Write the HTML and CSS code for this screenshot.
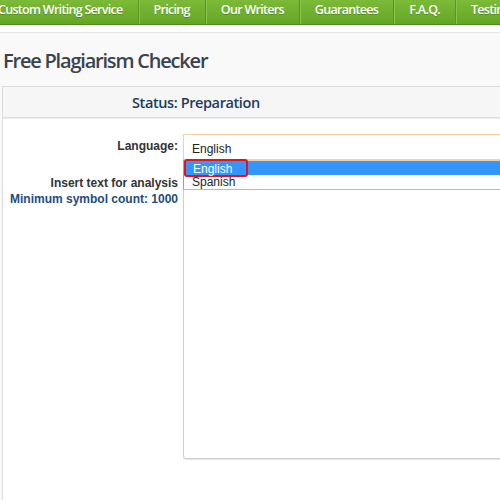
FILE: index.html
```html
<!DOCTYPE html>
<html>
<head>
<meta charset="utf-8">
<link rel="stylesheet" href="styles.css">
</head>
<body>
<nav class="nav">
  <ul class="nav-list">
    <li class="nav-item first">Custom Writing Service</li>
    <li class="nav-item">Pricing</li>
    <li class="nav-item">Our Writers</li>
    <li class="nav-item">Guarantees</li>
    <li class="nav-item">F.A.Q.</li>
    <li class="nav-item">Testimonials</li>
  </ul>
</nav>
<div class="strip"></div>
<h1 class="title">Free Plagiarism Checker</h1>
<section class="panel">
  <div class="status"><span class="status-text">Status: Preparation</span></div>
  <div class="form">
    <div class="row lang-row">
      <label class="label">Language:</label>
      <div class="field">
        <div class="select">English</div>
        <ul class="dropdown">
          <li class="opt selected"><span class="mark">English</span></li>
          <li class="opt">Spanish</li>
        </ul>
      </div>
    </div>
    <div class="row text-row">
      <div class="label">
        <div>Insert text for analysis</div>
        <div class="min">Minimum symbol count: 1000</div>
      </div>
      <div class="field">
        <div class="textarea"></div>
      </div>
    </div>
  </div>
</section>
</body>
</html>
```
FILE: styles.css
```css
html, body {
  margin: 0;
  padding: 0;
}
body {
  background: #f9f9f9;
  width: 500px;
  height: 500px;
  overflow: hidden;
  font-family: "Liberation Sans", Arial, sans-serif;
}
.nav {
  height: 24px;
  background: linear-gradient(#7cba38, #64a624);
  border-bottom: 1px solid #4f8b1c;
  overflow: hidden;
}
.nav-list {
  list-style: none;
  margin: 0 0 0 -8px;
  padding: 0;
  display: flex;
  white-space: nowrap;
}
.nav-item {
  font-family: "Open Sans", sans-serif;
  font-size: 12.5px;
  font-weight: 600;
  letter-spacing: -0.7px;
  color: #fff;
  text-shadow: 0 1px 0 rgba(0,0,0,0.2);
  line-height: 19px;
  height: 24px;
  padding: 0 15px;
  border-right: 1px solid #5a9722;
  box-shadow: 1px 0 0 #88c44c;
}
.nav-item.first {
  padding-left: 6px;
  padding-right: 15px;
}
.strip {
  height: 7px;
  background: #fefefe;
  border-bottom: 1px solid #e6e6e6;
}
.title {
  margin: 14px 0 0 3px;
  font-family: "Open Sans", sans-serif;
  font-weight: 600;
  font-size: 20px;
  letter-spacing: -1.2px;
  color: #38434f;
  line-height: 28px;
  height: 32px;
}
.panel {
  margin: 7px 0 0 2px;
  width: 520px;
  height: 420px;
  border: 1px solid #dcdcdc;
  background: #fff;
}
.status {
  height: 31px;
  background: #f6f6f6;
  border-bottom: 1px solid #dcdcdc;
  box-shadow: 0 1px 0 #ececec;
  padding-left: 129px;
  display: flex;
  align-items: center;
  padding-top: 1px;
  box-sizing: border-box;
}
.status-text {
  font-family: "Open Sans", sans-serif;
  font-size: 14.5px;
  font-weight: 600;
  letter-spacing: -0.4px;
  color: #1d3c5c;
}
.form {
  padding-top: 16px;
}
.row {
  display: flex;
  gap: 5px;
}
.label {
  width: 175px;
  flex: none;
  text-align: right;
  font-size: 12px;
  font-weight: bold;
  color: #333;
}
.lang-row .label {
  padding-top: 5px;
}
.field {
  flex: 1;
  position: relative;
}
.select {
  height: 25px;
  border: 1px solid #f0d2a8;
  border-bottom: none;
  background: #fff;
  font-size: 12px;
  color: #222;
  line-height: 28px;
  padding-left: 8px;
}
.dropdown {
  position: absolute;
  left: 0;
  top: 25px;
  width: 330px;
  margin: 0;
  padding: 0;
  list-style: none;
  background: #fff;
  border-top: 2px solid #f0d2a8;
  border-left: 1px solid #a0a0a0;
  border-bottom: 1px solid #b8b8c8;
  z-index: 2;
}
.opt {
  height: 14px;
  font-size: 12px;
  line-height: 15px;
  padding-left: 8px;
  color: #222;
}
.opt.selected {
  background: #3396ff;
  color: #fff;
  position: relative;
}
.mark {
  position: absolute;
  left: 0;
  top: -2px;
  width: 53px;
  height: 14px;
  border: 2px solid #e4141c;
  border-radius: 3px;
  padding-left: 7px;
  line-height: 16px;
}
.text-row {
  margin-top: 15px;
}
.text-row .label {
  line-height: 16px;
  padding-top: 0;
}
.min {
  color: #1d4d7e;
}
.textarea {
  height: 282px;
  border: 1px solid #cfcfcf;
  border-radius: 3px;
  box-shadow: 0 1px 1px #e4e4e4;
  background: #fff;
}
```
